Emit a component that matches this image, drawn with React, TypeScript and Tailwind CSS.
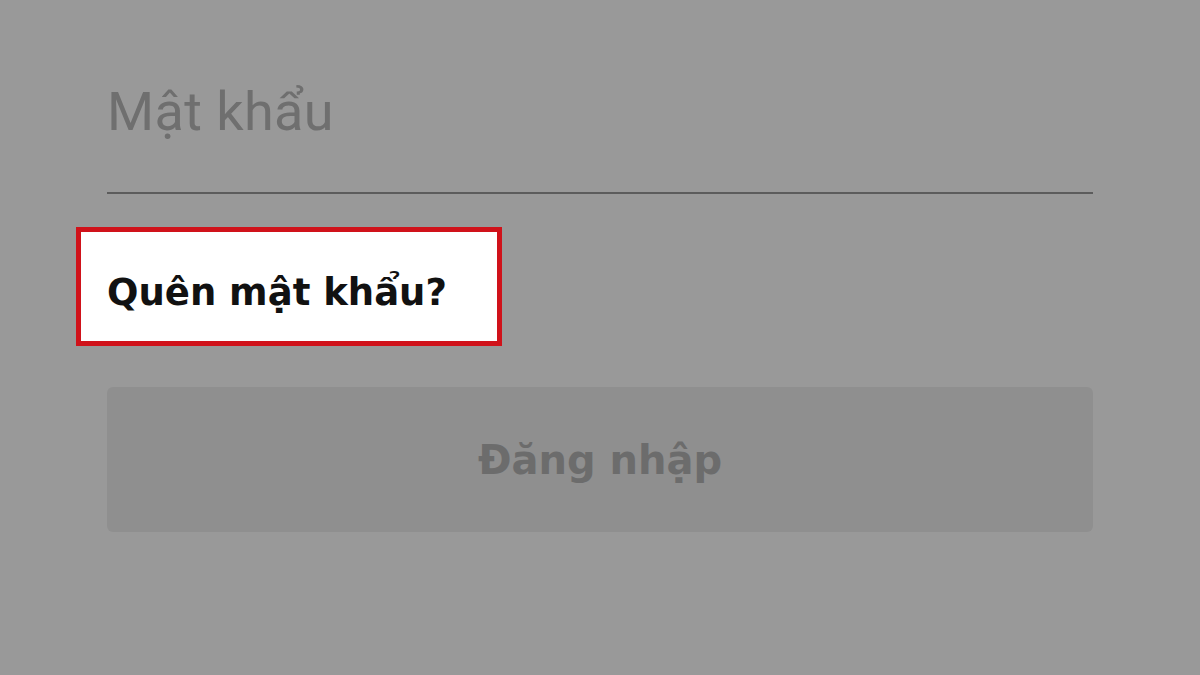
import React from "react";

export default function App() {
  return (
    <div className="w-[1200px] h-[675px] bg-[#999999] overflow-hidden px-[107px] pt-[85px]">
      <div className="border-b-[2px] border-[#5c5c5c] h-[109px]">
        <div className="text-[54px] leading-[54px] font-normal text-[#6f6f6f] tracking-[0.4px]" style={{ fontFamily: "Roboto, sans-serif" }}>
          Mật khẩu
        </div>
      </div>
      <div className="mt-[33px] -ml-[31px] w-[426px] h-[119px] border-[5px] border-[#d0121a] bg-white flex items-center pl-[26px] pt-[12px]">
        <span className="text-[37px] font-bold text-[#111111] leading-none" style={{ fontFamily: "'DejaVu Sans', sans-serif" }}>
          Quên mật khẩu?
        </span>
      </div>
      <div className="mt-[41px] h-[145px] rounded-[6px] bg-[#8f8f8f] flex items-center justify-center">
        <span className="text-[40px] font-bold text-[#6c6c6c] leading-none" style={{ fontFamily: "'DejaVu Sans', sans-serif" }}>
          Đăng nhập
        </span>
      </div>
    </div>
  );
}
